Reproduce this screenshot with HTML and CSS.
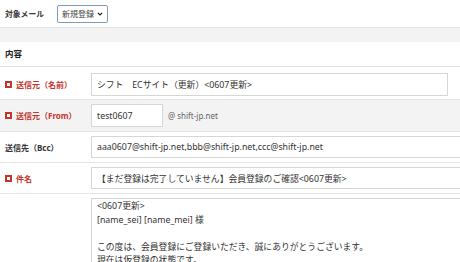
FILE: index.html
```html
<!DOCTYPE html>
<html lang="ja">
<head>
    <meta charset="UTF-8">
    <title>メール設定</title>
    <link rel="stylesheet" href="styles.css">
</head>
<body>
<div class="page">
    <div class="head">
        <span class="head-label">対象メール</span>
        <span class="select-wrap">
            <select class="select">
                <option>新規登録</option>
            </select>
            <svg class="chevron" width="6" height="4" viewBox="0 0 6 4"><path d="M0.8 0.8 L3 3 L5.2 0.8" fill="none" stroke="#222" stroke-width="1.2"/></svg>
        </span>
    </div>
    <div class="band"></div>
    <div class="section-title">内容</div>

    <div class="row first">
        <label class="label required"><span class="mark"></span>送信元（名前）</label>
        <div><input class="field field-name" type="text" value="シフト　ECサイト（更新）<0607更新>"></div>
    </div>
    <div class="row alt">
        <label class="label required"><span class="mark"></span>送信元（From）</label>
        <div class="from">
            <input class="field field-from" type="text" value="test0607">
            <span class="domain">@ shift-jp.net</span>
        </div>
    </div>
    <div class="row">
        <label class="label">送信先（Bcc）</label>
        <div><input class="field field-wide" type="text" value="aaa0607@shift-jp.net,bbb@shift-jp.net,ccc@shift-jp.net"></div>
    </div>
    <div class="row">
        <label class="label required"><span class="mark"></span>件名</label>
        <div><input class="field field-wide" type="text" value="【まだ登録は完了していません】会員登録のご確認<0607更新>"></div>
    </div>
    <div class="row body-row">
        <span class="label"></span>
        <div><textarea class="field body-text"><0607更新>
[name_sei] [name_mei] 様

この度は、会員登録にご登録いただき、誠にありがとうございます。
現在は仮登録の状態です。</textarea></div>
    </div>
</div>
</body>
</html>
```

FILE: styles.css
```css
body {
    margin: 0;
    font-family: "Noto Sans", "Noto Sans CJK JP", sans-serif;
    color: #333;
    background: #fff;
    overflow: hidden;
}
.page {
    width: 460px;
}
.head {
    display: flex;
    align-items: center;
    height: 27px;
    padding-left: 5px;
    box-sizing: border-box;
}
.head-label {
    width: 52px;
    font-size: 7.8px;
    font-weight: 700;
    color: #333;
}
.select-wrap {
    position: relative;
    display: block;
}
.select {
    display: block;
    appearance: none;
    -webkit-appearance: none;
    width: 51px;
    height: 18px;
    padding: 0 0 0 4px;
    border: 1px solid #7f9bbd;
    border-radius: 2px;
    background: #fff;
    font-family: inherit;
    font-size: 8px;
    color: #444;
}
.chevron {
    position: absolute;
    right: 5px;
    top: 7px;
}
.band {
    height: 14px;
    background: #f3f3f3;
    border-top: 1px solid #e4e4e4;
}
.section-title {
    height: 24px;
    line-height: 24px;
    padding-left: 5px;
    font-size: 8.5px;
    font-weight: 700;
    color: #222;
    border-bottom: 1px solid #e2e2e2;
}
.row {
    display: grid;
    grid-template-columns: 91px 1fr;
    align-items: center;
    padding: 4px 0;
    border-bottom: 1px solid #e4e4e4;
}
.row.first {
    padding: 6px 0 3px;
}
.row.alt {
    background: #f3f3f3;
}
.label {
    display: flex;
    align-items: center;
    padding-left: 5px;
    font-size: 8px;
    font-weight: 700;
    color: #333;
}
.label.required {
    color: #c4342d;
}
.mark {
    width: 3px;
    height: 3px;
    border: 2px solid #c4342d;
    background: #fff;
    margin-right: 4px;
}
.field {
    display: block;
    box-sizing: border-box;
    height: 22px;
    padding: 0 5px;
    border: 1px solid #d6d6d6;
    background: #fff;
    font-family: inherit;
    font-size: 8.8px;
    color: #333;
    outline: none;
}
.field-name {
    width: 357px;
    height: 23px;
}
.field-from {
    width: 72px;
    height: 23px;
}
.field-wide {
    width: 400px;
}
.from {
    display: flex;
    align-items: center;
    gap: 5px;
}
.domain {
    font-size: 8px;
    color: #666;
}
.body-row {
    align-items: start;
    border-bottom: 0;
}
.body-text {
    width: 400px;
    height: 120px;
    padding: 1px 5px;
    line-height: 13.5px;
    resize: none;
}
```
